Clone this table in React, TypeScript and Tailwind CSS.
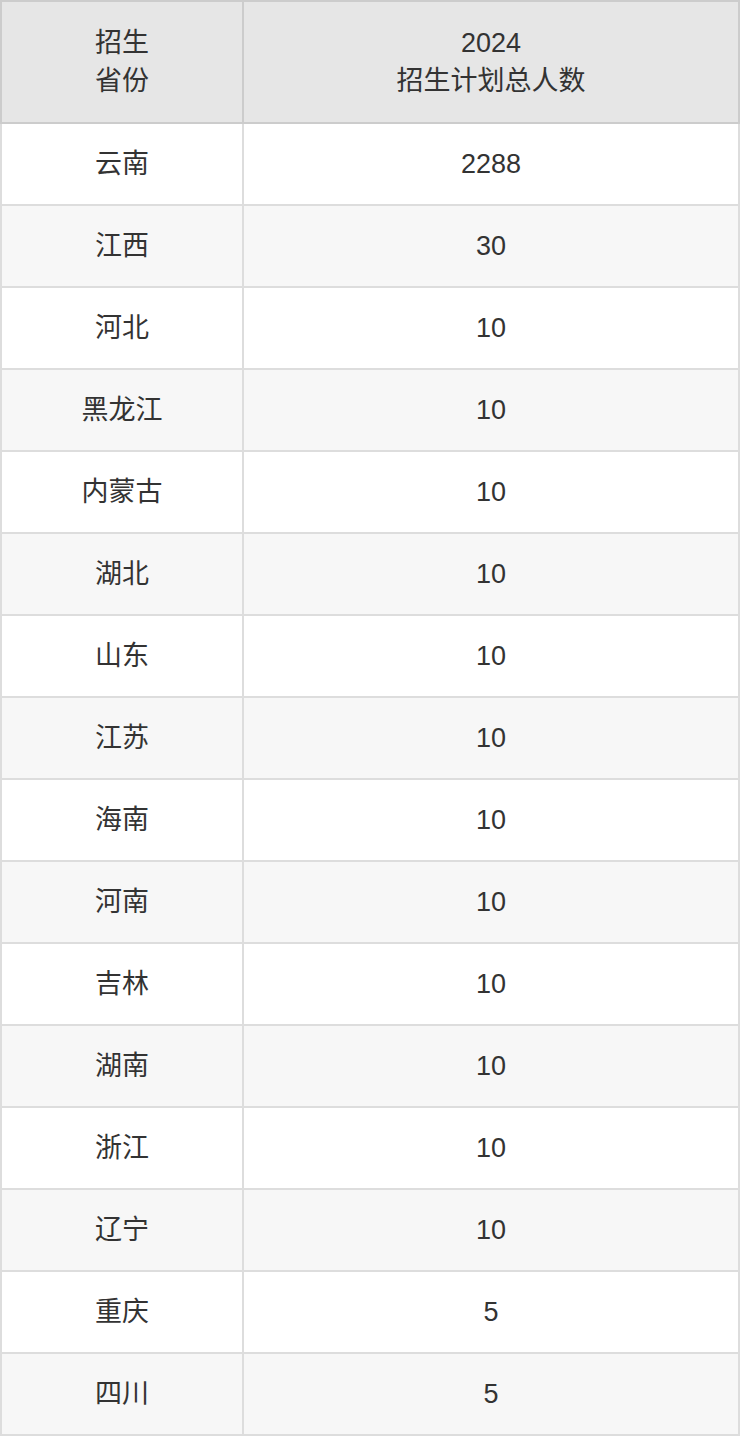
const rows: [string, string][] = [
  ["云南", "2288"],
  ["江西", "30"],
  ["河北", "10"],
  ["黑龙江", "10"],
  ["内蒙古", "10"],
  ["湖北", "10"],
  ["山东", "10"],
  ["江苏", "10"],
  ["海南", "10"],
  ["河南", "10"],
  ["吉林", "10"],
  ["湖南", "10"],
  ["浙江", "10"],
  ["辽宁", "10"],
  ["重庆", "5"],
  ["四川", "5"],
];

export default function App() {
  return (
    <div
      className="w-[740px] bg-white text-[#333333]"
      style={{ fontFamily: '"Liberation Sans", Arial, "Noto Sans CJK SC", sans-serif' }}
    >
      <table className="w-full table-fixed border-collapse text-center text-[27px] leading-[38px]">
        <colgroup>
          <col className="w-[242px]" />
          <col />
        </colgroup>
        <thead>
          <tr className="h-[122px] bg-[#e6e6e6]">
            <th className="border-2 border-[#cccccc] font-normal">
              招生
              <br />
              省份
            </th>
            <th className="border-2 border-[#cccccc] font-normal">
              2024
              <br />
              招生计划总人数
            </th>
          </tr>
        </thead>
        <tbody>
          {rows.map(([province, count], i) => (
            <tr key={province} className={`h-[82px] ${i % 2 === 1 ? "bg-[#f7f7f7]" : "bg-white"}`}>
              <td className="border-2 border-[#dddddd]">{province}</td>
              <td className="border-2 border-[#dddddd]">{count}</td>
            </tr>
          ))}
        </tbody>
      </table>
    </div>
  );
}
